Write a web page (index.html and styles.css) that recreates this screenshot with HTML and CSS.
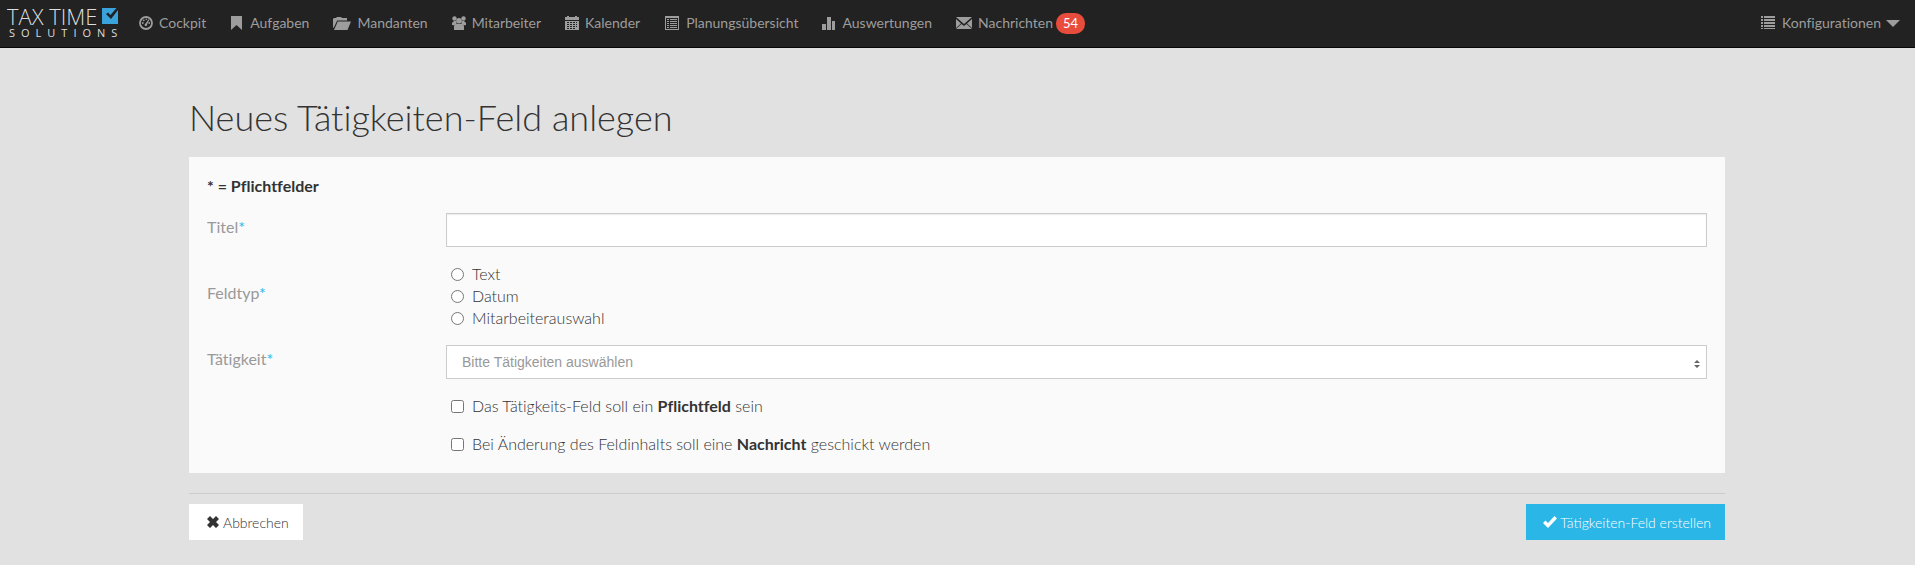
FILE: index.html
```html
<!DOCTYPE html>
<html lang="de">
<head>
    <meta charset="UTF-8">
    <meta name="viewport" content="width=device-width, initial-scale=1.0">
    <title>Neues Tätigkeiten-Feld anlegen</title>
    <link rel="stylesheet" href="styles.css">
</head>
<body>
    <nav class="navbar">
        <a class="brand" href="#">
            <span class="brand-top">TAX TIME
                <svg class="brand-check" viewBox="0 0 16 16"><path fill="#3ba3dc" d="M0 0h16v16H0z"/><path fill="#222" d="M4 6l2-1.500 2.500 2.500L14.500 0H16v2L9 11z"/></svg>
            </span>
            <span class="brand-bottom">SOLUTIONS</span>
        </a>
        <ul class="nav">
            <li><a href="#"><svg class="icon" viewBox="0 0 14 14"><circle cx="7" cy="7" r="6" fill="none" stroke="currentColor" stroke-width="1.800"/><circle cx="3.800" cy="7" r=".9"/><circle cx="4.800" cy="4.300" r=".9"/><circle cx="7.300" cy="3.300" r=".8"/><circle cx="10.200" cy="7" r=".9"/><path d="M9.600 3.200l.8.500-2.300 4.500a1.300 1.300 0 1 1-1.500-.7z"/></svg>Cockpit</a></li>
            <li><a href="#"><svg class="icon" viewBox="0 0 14 14"><path d="M1 0h11v14l-5.500-5L1 14z"/></svg>Aufgaben</a></li>
            <li><a href="#"><svg class="icon icon-wide" viewBox="0 0 18 14"><path d="M0 11V3l1-1h2l1-1h4l1 1h5v2.500H4.200L.6 12z"/><path d="M4.800 5.500H18L14.500 14H1z"/></svg>Mandanten</a></li>
            <li><a href="#"><svg class="icon" viewBox="0 0 14 14"><circle cx="2.500" cy="2.500" r="2.200"/><circle cx="11.500" cy="2.500" r="2.200"/><path d="M0 9V7l2-2h2.500v3L3 9.500zM14 9V7l-2-2H9.500v3L11 9.500z"/><circle cx="7" cy="4.800" r="2.800"/><path d="M2 14v-4l2-2h6l2 2v4z"/></svg>Mitarbeiter</a></li>
            <li><a href="#"><svg class="icon" viewBox="0 0 14 14"><path fill-rule="evenodd" d="M2 0h2v1h6V0h2v1h2v3H0V1h2zM0 5h14v9H0zM2 6v1h2V6zM5 6v1h2V6zM8 6v1h2V6zM11 6v1h1V6zM2 8v1h2V8zM5 8v1h2V8zM8 8v1h2V8zM11 8v1h1V8zM2 10v1h2v-1zM5 10v1h2v-1zM8 10v1h2v-1zM11 10v1h1v-1zM2 12v1h2v-1zM5 12v1h2v-1zM8 12v1h2v-1z"/></svg>Kalender</a></li>
            <li><a href="#"><svg class="icon icon-medium" viewBox="0 0 16 14"><path fill-rule="evenodd" d="M1 0h14v14H1zM2 2v11h12V2z"/><path d="M3 3h2v1H3zM6 3h7v1H6zM3 5h2v1H3zM6 5h7v1H6zM3 7h2v1H3zM6 7h7v1H6zM3 9h2v1H3zM6 9h7v1H6zM3 11h2v1H3zM6 11h7v1H6z"/></svg>Planungsübersicht</a></li>
            <li><a href="#"><svg class="icon" viewBox="0 0 14 14"><path d="M0 8h4v6H0zM5 1h4v13H5zM10 5h3v9h-3z"/></svg>Auswertungen</a></li>
            <li><a href="#"><svg class="icon icon-medium" viewBox="0 0 16 14"><path d="M0 1h16L8 8zM0 3l5 4.500L0 12zM16 3l-5 4.500L16 12zM0 13l5.500-5L8 10l2.500-2 5.500 5z"/></svg>Nachrichten<span class="badge">54</span></a></li>
        </ul>
        <ul class="nav nav-right">
            <li><a href="#"><svg class="icon icon-medium" viewBox="0 0 16 14"><path d="M1 0h2v2H1zM4 0h11v2H4zM1 3h2v2H1zM4 3h11v2H4zM1 6h2v2H1zM4 6h11v2H4zM1 9h2v2H1zM4 9h11v2H4zM1 12h2v1H1zM4 12h11v1H4z"/></svg>Konfigurationen<span class="caret"></span></a></li>
        </ul>
    </nav>

    <main class="container">
        <h1>Neues Tätigkeiten-Feld anlegen</h1>
        <form>
            <div class="panel">
                <strong>* = Pflichtfelder</strong>
                <div class="row">
                    <label class="row-label" for="titel">Titel<span class="required">*</span></label>
                    <input class="control" type="text" id="titel" name="titel">
                </div>
                <div class="row" role="radiogroup" aria-labelledby="feldtyp">
                    <span class="row-label" id="feldtyp">Feldtyp<span class="required">*</span></span>
                    <div>
                        <label class="option"><input type="radio" name="feldtyp" value="text">Text</label>
                        <label class="option"><input type="radio" name="feldtyp" value="datum">Datum</label>
                        <label class="option"><input type="radio" name="feldtyp" value="mitarbeiter">Mitarbeiterauswahl</label>
                    </div>
                </div>
                <div class="row">
                    <label class="row-label" for="taetigkeit">Tätigkeit<span class="required">*</span></label>
                    <select class="control" id="taetigkeit" name="taetigkeit">
                        <option>Bitte Tätigkeiten auswählen</option>
                    </select>
                </div>
                <div class="row">
                    <label class="option indent"><input type="checkbox" name="pflichtfeld"><span>Das Tätigkeits-Feld soll ein <b>Pflichtfeld</b> sein</span></label>
                </div>
                <div class="row">
                    <label class="option indent"><input type="checkbox" name="nachricht"><span>Bei Änderung des Feldinhalts soll eine <b>Nachricht</b> geschickt werden</span></label>
                </div>
            </div>
            <div class="actions">
                <button type="button" class="btn"><svg class="btn-icon" viewBox="0 0 14 14"><path d="M4 1l3 3 3-3 3 3-3 3 3 3-3 3-3-3-3 3-3-3 3-3-3-3z"/></svg>Abbrechen</button>
                <button type="submit" class="btn btn-primary"><svg class="btn-icon" viewBox="0 0 14 14"><path d="M0 8l2.500-2.500L5 8l6.500-7L14 3.500 5 13z"/></svg>Tätigkeiten-Feld erstellen</button>
            </div>
        </form>
    </main>
</body>
</html>
```
FILE: styles.css
```css
* {
    box-sizing: border-box;
}
body {
    margin: 0;
    background: #e1e1e1;
    color: #333;
    font-family: Lato, sans-serif;
    font-size: 16px;
    font-weight: 300;
    font-variant-ligatures: none;
    line-height: 22px;
}

/* Navigation */
.navbar {
    display: flex;
    height: 48px;
    background: #222;
    border-bottom: 1px solid #080808;
}
.brand {
    display: flex;
    flex-direction: column;
    width: 127px;
    padding: 5px 0 0 7px;
    color: #ddd;
    font-family: "Open Sans", sans-serif;
    text-decoration: none;
    white-space: nowrap;
}
.brand-top {
    display: flex;
    align-items: center;
    gap: 4px;
    font-size: 22px;
    font-weight: 300;
    line-height: 22px;
}
.brand-check {
    width: 16px;
    height: 16px;
}
.brand-bottom {
    padding-left: 2px;
    font-size: 11px;
    font-weight: 400;
    letter-spacing: 6px;
    line-height: 11px;
}
.nav {
    display: flex;
    margin: 0;
    padding: 0;
    list-style: none;
}
.nav-right {
    margin-left: auto;
    padding-right: 3px;
}
.nav a {
    display: flex;
    align-items: center;
    height: 46px;
    padding: 0 12px;
    color: #9d9d9d;
    font-size: 14px;
    font-weight: 400;
    text-decoration: none;
    white-space: nowrap;
}
.icon {
    width: 14px;
    height: 14px;
    margin-right: 6px;
    fill: currentColor;
}
.icon-medium {
    width: 16px;
}
.icon-wide {
    width: 18px;
}
.badge {
    margin-left: 3px;
    padding: 0 7px;
    border-radius: 10px;
    background: #e74c3c;
    color: #fff;
    font-size: 13px;
    line-height: 21px;
}
.caret {
    margin-left: 5px;
    border-top: 7px solid;
    border-left: 7px solid transparent;
    border-right: 7px solid transparent;
}

/* Form */
.container {
    max-width: 1537px;
    margin: 0 auto;
    padding-right: 1px;
}
h1 {
    margin: 0;
    padding: 47px 0 18px;
    font-size: 36px;
    font-weight: 300;
    line-height: 44px;
}
.panel {
    display: flex;
    flex-direction: column;
    gap: 16px;
    padding: 18px;
    background: #fafafa;
}
strong,
b {
    font-weight: 700;
}
.row {
    display: grid;
    grid-template-columns: 239px 1fr;
    align-items: center;
}
.row-label {
    padding-bottom: 7px;
    color: #999;
    font-weight: 400;
}
.required {
    color: #2bb6e8;
}
.control {
    width: 100%;
    height: 34px;
    padding: 0 15px;
    border: 1px solid #ccc;
    border-radius: 0;
    background-color: #fff;
    color: #999;
    font-family: "Liberation Sans", Arial, sans-serif;
    font-size: 14px;
}
input.control {
    box-shadow: inset 0 1px 1px rgba(0, 0, 0, 0.08);
}
select.control {
    appearance: none;
    background-image: url("data:image/svg+xml,%3Csvg xmlns='http://www.w3.org/2000/svg' width='6' height='8'%3E%3Cpath fill='%23666' d='M0 3l3-3 3 3zM0 5h6L3 8z'/%3E%3C/svg%3E");
    background-repeat: no-repeat;
    background-position: right 6px bottom 10px;
}
.option {
    display: flex;
    align-items: center;
}
.option input {
    width: 13px;
    height: 13px;
    margin: 0 8px 0 5px;
}
.indent {
    grid-column: 2;
}

/* Buttons */
.actions {
    display: flex;
    justify-content: space-between;
    margin-top: 20px;
    padding-top: 10px;
    border-top: 1px solid #ccc;
}
.btn {
    display: flex;
    align-items: center;
    height: 36px;
    padding: 0 14px 0 17px;
    border: none;
    background: #fff;
    color: #333;
    font-family: Lato, sans-serif;
    font-size: 14px;
    font-weight: 300;
    cursor: pointer;
}
.btn-primary {
    background: #2bb6e8;
    color: #fff;
}
.btn-icon {
    width: 14px;
    height: 14px;
    margin-right: 3px;
    fill: currentColor;
}
```
